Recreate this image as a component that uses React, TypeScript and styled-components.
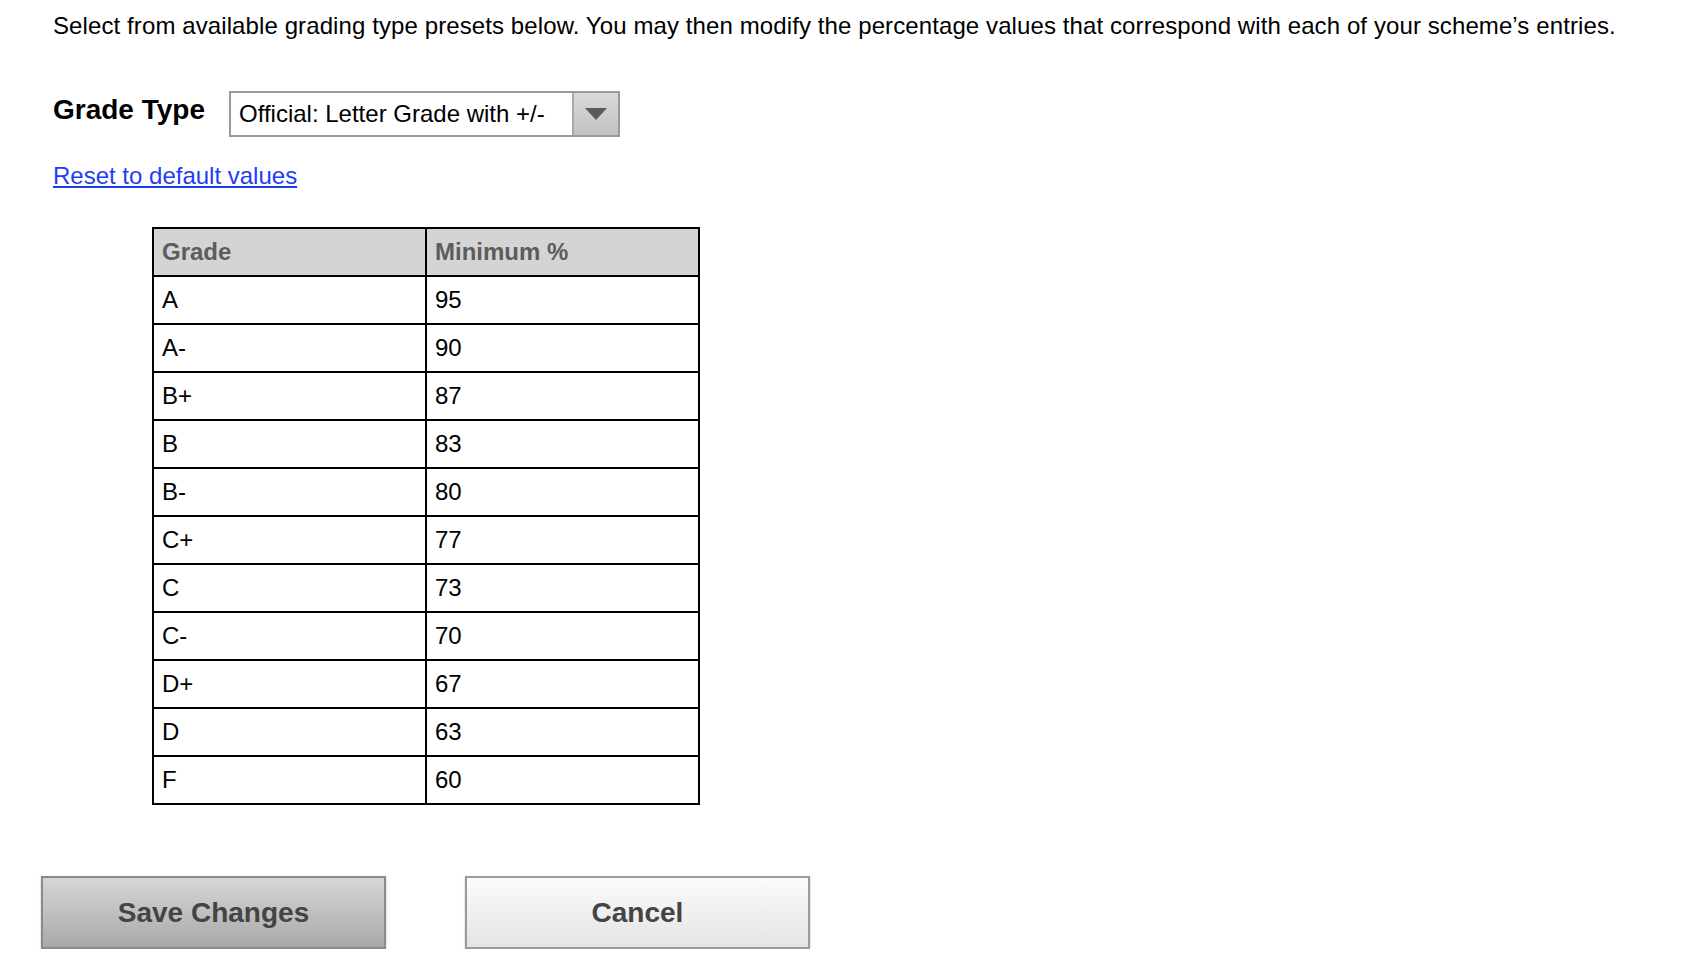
import React from "react";
import styled, { createGlobalStyle } from "styled-components";

const Global = createGlobalStyle`
  html, body { margin: 0; padding: 0; background: #fff; }
  body { font-family: "Liberation Sans", Arial, Helvetica, sans-serif; color: #000; }
`;

const Page = styled.div`
  padding: 14px 41px 0 41px;
  display: flex;
  flex-direction: column;
`;

const Intro = styled.p`
  margin: 0 0 0 12px;
  font-size: 24px;
  line-height: 24px;
  letter-spacing: 0.1px;
  white-space: nowrap;
`;

const TypeRow = styled.div`
  display: flex;
  align-items: center;
  margin: 53px 0 0 12px;
`;

const Label = styled.span`
  font-weight: bold;
  font-size: 28px;
  width: 176px;
  margin-top: -8px;
`;

const Select = styled.div`
  display: flex;
  width: 391px;
  height: 46px;
  box-sizing: border-box;
  border: 2px solid #9a9a9a;
  background: #fff;
`;

const SelectText = styled.span`
  flex: 1;
  display: flex;
  align-items: center;
  padding-left: 8px;
  font-size: 24px;
`;

const SelectArrow = styled.span`
  width: 44px;
  display: flex;
  align-items: center;
  justify-content: center;
  border-left: 2px solid #a8a8a8;
  background: linear-gradient(#dadada, #c2c2c2);
`;

const Link = styled.a`
  margin: 25px 0 0 12px;
  align-self: flex-start;
  font-size: 24px;
  line-height: 28px;
  color: #1f3cf5;
  text-decoration: underline;
`;

const Table = styled.table`
  margin: 37px 0 0 111px;
  width: 548px;
  border-collapse: collapse;
  table-layout: fixed;
  border: 2px solid #000;
`;

const HeadCell = styled.th`
  height: 46px;
  padding: 0 8px;
  text-align: left;
  font-size: 24px;
  font-weight: bold;
  color: #5c5c5c;
  background: #d4d4d4;
  border: 2px solid #000;
`;

const Cell = styled.td`
  height: 46px;
  padding: 0 8px;
  font-size: 24px;
  border: 2px solid #000;
`;

const Buttons = styled.div`
  display: flex;
  gap: 79px;
  margin-top: 71px;
`;

const Button = styled.button<{ $primary?: boolean }>`
  width: 345px;
  height: 73px;
  box-sizing: border-box;
  font-family: "Liberation Sans", Arial, sans-serif;
  font-size: 28px;
  font-weight: bold;
  color: #444;
  border: 2px solid ${(p) => (p.$primary ? "#8a8a8a" : "#9a9a9a")};
  background: ${(p) =>
    p.$primary
      ? "linear-gradient(#d6d6d6, #a9a9a9)"
      : "linear-gradient(#fbfbfb, #e4e4e4)"};
  box-shadow: 0 1px 2px rgba(0, 0, 0, 0.25);
  cursor: pointer;
`;

const rows: [string, string][] = [
  ["A", "95"],
  ["A-", "90"],
  ["B+", "87"],
  ["B", "83"],
  ["B-", "80"],
  ["C+", "77"],
  ["C", "73"],
  ["C-", "70"],
  ["D+", "67"],
  ["D", "63"],
  ["F", "60"],
];

export default function App() {
  return (
    <>
      <Global />
      <Page>
        <Intro>
          Select from available grading type presets below. You may then modify the percentage values that correspond with each of your scheme’s entries.
        </Intro>
        <TypeRow>
          <Label>Grade Type</Label>
          <Select>
            <SelectText>Official: Letter Grade with +/-</SelectText>
            <SelectArrow>
              <svg width="22" height="12" viewBox="0 0 22 12">
                <polygon points="0,0 22,0 11,12" fill="#5a5a5a" />
              </svg>
            </SelectArrow>
          </Select>
        </TypeRow>
        <Link href="#">Reset to default values</Link>
        <Table>
          <thead>
            <tr>
              <HeadCell>Grade</HeadCell>
              <HeadCell>Minimum %</HeadCell>
            </tr>
          </thead>
          <tbody>
            {rows.map(([g, m]) => (
              <tr key={g}>
                <Cell>{g}</Cell>
                <Cell>{m}</Cell>
              </tr>
            ))}
          </tbody>
        </Table>
        <Buttons>
          <Button $primary>Save Changes</Button>
          <Button>Cancel</Button>
        </Buttons>
      </Page>
    </>
  );
}
